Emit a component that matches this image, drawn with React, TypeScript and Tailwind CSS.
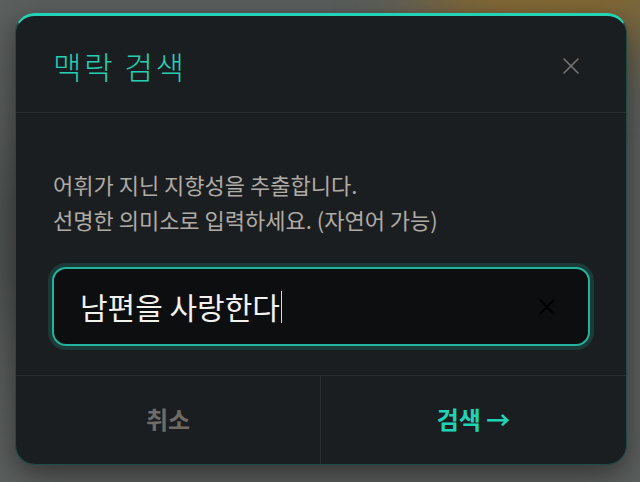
import { X } from "lucide-react";

const font = { fontFamily: '"Noto Sans CJK KR", "Noto Sans", sans-serif' };

export default function App() {
  return (
    <div
      className="relative h-[482px] w-[640px] overflow-hidden bg-[#5b5f5d]"
      style={font}
    >
      {/* blurred backdrop */}
      <div className="absolute -right-10 -top-16 h-28 w-[260px] rounded-full bg-[#8a6a2e] blur-2xl" />
      <div className="absolute -left-10 top-40 h-40 w-40 rounded-full bg-[#3f4442] blur-3xl" />

      <div className="relative px-[15px] pt-[13px]">
        <div className="flex h-[452px] w-[612px] flex-col overflow-hidden rounded-[20px] border border-t-[3px] border-[#1d4d45] border-t-[#22d3b6] bg-[#1b1e21] shadow-[0_10px_30px_rgba(0,0,0,0.45)]">
          {/* header */}
          <div className="flex h-[97px] shrink-0 items-center justify-between border-b border-[#2a2e31] pl-[37px] pr-[41px]">
            <h1 className="pt-[4px] text-[31px] font-light tracking-[2.5px] text-[#25cfb4]">
              맥락 검색
            </h1>
            <X className="mt-[4px] h-[28px] w-[28px] text-[#77736c]" strokeWidth={1.4} />
          </div>

          {/* body */}
          <div className="px-[37px] pt-[54px] text-[22px] leading-[35px] text-[#b0aba4]">
            <p>어휘가 지닌 지향성을 추출합니다.</p>
            <p>선명한 의미소로 입력하세요. (자연어 가능)</p>
          </div>

          <div className="px-[32px] pt-[26px] pb-[25px]">
            <div className="rounded-[18px] bg-[#1c3a37] p-[4px]">
              <div className="flex h-[79px] items-center rounded-[14px] border-2 border-[#22b39c] bg-[#0d0e10] pl-[26px] pr-[28px]">
                <span className="text-[30px] text-[#f2f2ee]">남편을 사랑한다</span>
                <span className="ml-[1px] h-[32px] w-[1.5px] bg-[#d8d8d8]" />
                <X className="ml-auto h-[26px] w-[26px] text-black" strokeWidth={2} />
              </div>
            </div>
          </div>

          {/* footer */}
          <div className="grid flex-1 grid-cols-2 border-t border-[#2a2e31]">
            <button className="flex items-center justify-center border-r border-[#2a2e31] pb-[2px] text-[24px] font-bold text-[#6f6b66]">
              취소
            </button>
            <button className="flex items-center justify-center pb-[2px] text-[24px] font-bold text-[#21d3b6]">
              검색 →
            </button>
          </div>
        </div>
      </div>
    </div>
  );
}
